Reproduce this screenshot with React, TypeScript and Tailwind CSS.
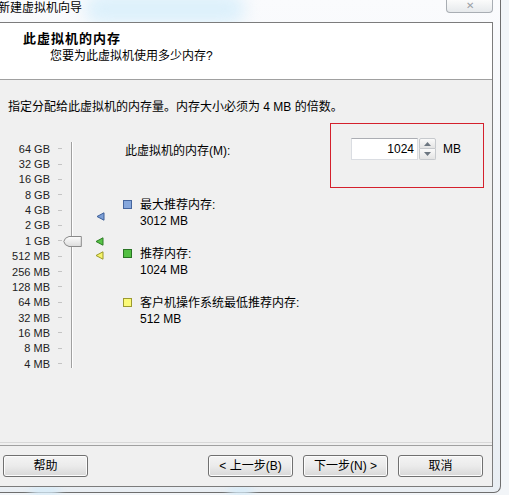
import React from 'react';

const font = '"Liberation Sans", "Noto Sans CJK SC", sans-serif';

const sizes = [
    '64 GB', '32 GB', '16 GB', '8 GB', '4 GB', '2 GB', '1 GB',
    '512 MB', '256 MB', '128 MB', '64 MB', '32 MB', '16 MB', '8 MB', '4 MB',
];

const Tri = ({ fill, stroke }: { fill: string; stroke: string }) => (
    <svg width="9" height="9" viewBox="0 0 9 9">
        <path d="M1 4.5 L8 0.8 V8.2 Z" fill={fill} stroke={stroke} strokeWidth="1" strokeLinejoin="round" />
    </svg>
);

const Legend = ({ box, label, value }: { box: string; label: string; value: string }) => (
    <div className="flex items-start">
        <div className={`mt-[3px] w-[9px] h-[9px] border ${box}`} />
        <div className="ml-[8px] flex flex-col">
            <span className="leading-[16px]">{label}</span>
            <span className="leading-[16px]">{value}</span>
        </div>
    </div>
);

const Btn = ({ children }: { children: React.ReactNode }) => (
    <button className="w-[85px] h-[22px] rounded-[3px] border border-[#707070] bg-gradient-to-b from-[#f4f4f4] via-[#ebebeb] to-[#d8d8d8] text-[12px] text-black flex items-center justify-center shadow-[inset_0_0_0_1px_#fcfcfc]">
        {children}
    </button>
);

export default function App() {
    return (
        <div className="w-[509px] h-[495px] relative overflow-hidden bg-[#f2f5f8]" style={{ fontFamily: font }}>
            {/* window frame */}
            <div className="relative w-[501px] h-[493px] flex flex-col bg-gradient-to-b from-[#fafbfd] to-[#e9eef3] border-r border-b border-[#6e6e6e] rounded-br-[7px]">
                {/* glass blur in title bar */}
                <div className="absolute left-[85px] top-[-6px] w-[160px] h-[30px] rounded-full bg-[#dcf0fb] blur-[8px]" />
                <div className="absolute left-[30px] bottom-[-4px] w-[30px] h-[10px] rounded-full bg-[#d6ebf8] blur-[4px]" />
                <div className="absolute left-[228px] bottom-[-4px] w-[25px] h-[10px] rounded-full bg-[#d6ebf8] blur-[4px]" />

                {/* title bar */}
                <div className="relative h-[22px] flex items-start">
                    <span className="-ml-[2px] mt-[1px] text-[12px] leading-[15px] text-black whitespace-nowrap">新建虚拟机向导</span>
                    <div className="absolute right-[7px] top-0 w-[47px] h-[13px] rounded-b-[4px] border border-t-0 border-[#a8adb3] bg-gradient-to-b from-[#fbfbfb] to-[#e6e9ec] flex items-center justify-center">
                        <span className="text-[10px] leading-[10px] text-[#9aa0a6]">✕</span>
                    </div>
                </div>

                {/* client area */}
                <div className="relative w-[493px] h-[465px] border border-l-0 border-[#7c7c7c] bg-[#f0f0f0] flex flex-col text-[12px] text-black">
                    {/* header */}
                    <div className="h-[57px] bg-white border-b border-[#a0a0a0] flex flex-col pt-[8px]">
                        <span className="ml-[23px] text-[13px] leading-[16px] font-bold tracking-[1px]">此虚拟机的内存</span>
                        <span className="ml-[50px] mt-[1px] leading-[16px]">您要为此虚拟机使用多少内存?</span>
                    </div>

                    {/* body */}
                    <div className="flex-1 flex flex-col">
                        <span className="ml-[8px] mt-[19px] leading-[16px]">指定分配给此虚拟机的内存量。内存大小必须为 4 MB 的倍数。</span>

                        <div className="mt-[23px] flex items-start">
                            {/* slider */}
                            <div className="relative mt-[3px] w-[123px] h-[231px] flex flex-col">
                                {sizes.map((s) => (
                                    <div key={s} className="h-[15.36px] flex items-center">
                                        <span className="w-[50px] text-right text-[11px] leading-[12px] text-[#222]">{s}</span>
                                        <span className="ml-[8px] w-[4px] h-px bg-[#c4c4c4]" />
                                    </div>
                                ))}
                                <div className="absolute left-[71px] top-[1px] h-[226px] w-[2px] border-l border-[#a0a0a0] border-r border-r-white" />
                                <svg className="absolute left-[63px] top-[95px]" width="19" height="11" viewBox="0 0 19 11">
                                    <defs>
                                        <linearGradient id="th" x1="0" y1="0" x2="0" y2="1">
                                            <stop offset="0" stopColor="#fdfdfd" />
                                            <stop offset="1" stopColor="#dcdcdc" />
                                        </linearGradient>
                                    </defs>
                                    <path d="M0.8 5.5 Q1.5 1.5 6 0.5 H18.3 V10.5 H6 Q1.5 9.5 0.8 5.5 Z" fill="url(#th)" stroke="#8a8a8a" strokeWidth="1" />
                                </svg>
                                <div className="absolute left-[96px] top-[71px]">
                                    <Tri fill="#7c9fd6" stroke="#3d5f98" />
                                </div>
                                <div className="absolute left-[95px] top-[96px]">
                                    <Tri fill="#58c448" stroke="#2c7c24" />
                                </div>
                                <div className="absolute left-[95px] top-[110px]">
                                    <Tri fill="#f6f46a" stroke="#9a9828" />
                                </div>
                            </div>

                            {/* legend + spinner */}
                            <div className="flex flex-col">
                                <div className="flex items-start">
                                    <span className="ml-[2px] w-[226px] mt-[5px] leading-[16px]">此虚拟机的内存(M):</span>
                                    <div className="relative flex items-center">
                                        <div className="absolute left-[-21px] top-[-15px] w-[154px] h-[65px] border border-[#d4202c]" />
                                        <div className="w-[67px] h-[22px] bg-white border border-[#dadde2] border-t-[#abadb3] flex items-center justify-end pr-[3px] leading-[16px]">1024</div>
                                        <div className="ml-[1px] w-[17px] h-[22px] flex flex-col">
                                            <div className="h-[11px] border border-[#c6c9cd] bg-gradient-to-b from-[#fafafa] to-[#e4e4e4] flex items-center justify-center rounded-t-[2px]">
                                                <svg width="7" height="4" viewBox="0 0 7 4"><path d="M0 4 L3.5 0 L7 4 Z" fill="#6c7680" /></svg>
                                            </div>
                                            <div className="h-[11px] border border-t-0 border-[#c6c9cd] bg-gradient-to-b from-[#fafafa] to-[#e4e4e4] flex items-center justify-center rounded-b-[2px]">
                                                <svg width="7" height="4" viewBox="0 0 7 4"><path d="M0 0 L3.5 4 L7 0 Z" fill="#6c7680" /></svg>
                                            </div>
                                        </div>
                                        <span className="ml-[7px] leading-[16px]">MB</span>
                                    </div>
                                </div>
                                <div className="mt-[37px] flex flex-col gap-[17px]">
                                    <Legend box="bg-[#86a7dc] border-[#46669e]" label="最大推荐内存:" value="3012 MB" />
                                    <Legend box="bg-[#52bf42] border-[#2a7424]" label="推荐内存:" value="1024 MB" />
                                    <Legend box="bg-[#fbfa78] border-[#9c9a30]" label="客户机操作系统最低推荐内存:" value="512 MB" />
                                </div>
                            </div>
                        </div>
                    </div>

                    {/* footer */}
                    <div className="flex flex-col">
                        <div className="h-px bg-[#d8d8d8]" />
                        <div className="mt-[2px] h-px bg-[#a0a0a0]" />
                        <div className="h-[40px] flex items-center pl-[3px] pr-[9px]">
                            <Btn>帮助</Btn>
                            <div className="flex-1" />
                            <Btn>&lt; 上一步(B)</Btn>
                            <div className="w-[10px]" />
                            <Btn>下一步(N) &gt;</Btn>
                            <div className="w-[10px]" />
                            <Btn>取消</Btn>
                        </div>
                    </div>
                </div>
            </div>
        </div>
    );
}
